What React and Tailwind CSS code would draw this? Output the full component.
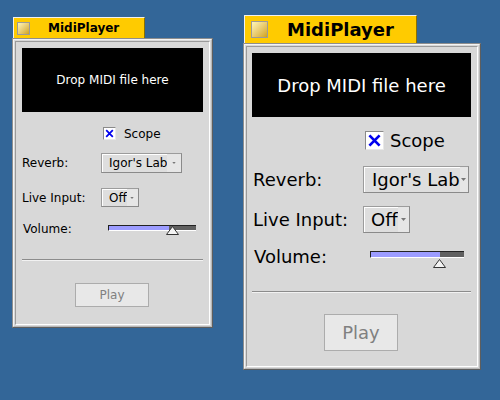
import React from "react";

const font = "font-['DejaVu_Sans','Liberation_Sans',sans-serif]";

function Frame({ className, children }) {
  return (
    <div className={"border border-[#8e8e8e] border-r-[#5e5e5e] border-b-[#5e5e5e] " + className}>
      <div className="h-full border border-[#f4f4f4] border-r-[#b8b8b8] border-b-[#b8b8b8] bg-[#d8d8d8] p-px">
        <div className="h-full border border-[#9a9a9a] border-r-white border-b-white bg-[#d8d8d8] flex flex-col">
          {children}
        </div>
      </div>
    </div>
  );
}

function CloseBox({ className }) {
  return (
    <div
      className={
        "border border-[#9a9a9a] bg-linear-to-br from-[#fff6b8] to-[#d2a400] " + className
      }
    />
  );
}

function Check({ className }) {
  return (
    <div className={"border border-[#8a8a8a] border-r-[#e8e8e8] border-b-[#e8e8e8] bg-white " + className}>
      <svg viewBox="0 0 10 10" className="w-full h-full">
        <path d="M2 2 L8 8 M8 2 L2 8" stroke="#0000ee" strokeWidth="1.6" fill="none" />
      </svg>
    </div>
  );
}

function Arrow({ className }) {
  return (
    <svg viewBox="0 0 5 3" className={className}>
      <path d="M0 0 L5 0 L2.5 3 Z" fill="#777" />
    </svg>
  );
}

function Menu({ label, className, textClass, arrowClass }) {
  return (
    <div
      className={
        "flex items-center border border-[#9c9c9c] border-r-[#8a8a8a] border-b-[#8a8a8a] bg-[#dedede] shadow-[inset_1px_1px_0_#ffffff] " +
        className
      }
    >
      <span className={"whitespace-nowrap " + textClass}>{label}</span>
      <div className="flex-1 h-full bg-[#e6e6e6] flex items-center justify-center">
        <Arrow className={arrowClass} />
      </div>
    </div>
  );
}

function Separator({ className }) {
  return (
    <div className={className}>
      <div className="h-px bg-[#8c8c8c]" />
      <div className="h-px bg-[#f2f2f2]" />
    </div>
  );
}

export default function App() {
  return (
    <div className={"relative w-[500px] h-[400px] overflow-hidden bg-[#336698] text-black " + font}>
      {/* small window */}
      <div className="absolute left-[12px] top-[17px] flex flex-col">
        <div className="ml-px w-[132px] h-[21px] bg-[#ffcb00] border-t border-l border-[#f0f0f0] border-r border-r-[#8a7000] flex items-center">
          <CloseBox className="ml-[3px] w-[13px] h-[13px]" />
          <span className="ml-[18px] text-[12px] font-bold leading-none">MidiPlayer</span>
        </div>
        <Frame className="w-[201px] h-[290px]">
          <div className="ml-[6px] mt-[6px] w-[181px] h-[64px] bg-black text-white text-[12px] flex items-center justify-center">
            Drop MIDI file here
          </div>
          <div className="mt-[15px] ml-[87px] flex items-center h-[13px]">
            <Check className="w-[13px] h-[13px]" />
            <span className="ml-[8px] text-[12px]">Scope</span>
          </div>
          <div className="mt-[13px] ml-[6px] flex items-center">
            <span className="w-[79px] text-[12px]">Reverb:</span>
            <Menu
              label="Igor's Lab"
              className="w-[81px] h-[20px]"
              textClass="pl-[7px] text-[12px]"
              arrowClass="w-[4px] h-[2px]"
            />
          </div>
          <div className="mt-[15px] ml-[6px] flex items-center">
            <span className="w-[79px] text-[12px]">Live Input:</span>
            <Menu
              label="Off"
              className="w-[38px] h-[19px]"
              textClass="pl-[7px] text-[12px]"
              arrowClass="w-[4px] h-[2px]"
            />
          </div>
          <div className="mt-[14px] ml-[7px] flex items-start">
            <span className="w-[85px] text-[12px] leading-[16px]">Volume:</span>
            <div className="relative mt-[4px] w-[88px] h-[6px] border-t border-l border-[#222] border-b border-b-white flex">
              <div className="w-[60px] bg-[#9c9cff]" />
              <div className="flex-1 bg-[#606060]" />
              <svg viewBox="0 0 13 9" className="absolute left-[57px] top-0 w-[13px] h-[9px]">
                <path d="M6.5 0.5 L12.5 8.5 L0.5 8.5 Z" fill="#f4f4f4" stroke="#333" strokeWidth="1" />
              </svg>
            </div>
          </div>
          <Separator className="mt-[22px] ml-[6px] w-[181px]" />
          <div className="mt-[22px] ml-[59px] w-[74px] h-[24px] border border-[#acacac] bg-[#e8e8e8] flex items-center justify-center text-[12px] text-[#808080]">
            Play
          </div>
        </Frame>
      </div>

      {/* large window */}
      <div className="absolute left-[243px] top-[15px] flex flex-col">
        <div className="ml-px w-[173px] h-[28px] bg-[#ffcb00] border-t border-l border-[#f0f0f0] border-r border-r-[#8a7000] flex items-center">
          <CloseBox className="ml-[6px] w-[17px] h-[17px]" />
          <span className="ml-[19px] text-[18px] font-bold leading-none">MidiPlayer</span>
        </div>
        <Frame className="w-[238px] h-[327px]">
          <div className="ml-[5px] mt-[6px] w-[219px] h-[64px] bg-black text-white text-[18px] flex items-center justify-center">
            Drop MIDI file here
          </div>
          <div className="mt-[14px] ml-[118px] flex items-center h-[19px]">
            <Check className="w-[19px] h-[19px]" />
            <span className="ml-[6px] text-[18px]">Scope</span>
          </div>
          <div className="mt-[16px] ml-[6px] flex items-center">
            <span className="w-[110px] text-[18px]">Reverb:</span>
            <Menu
              label="Igor's Lab"
              className="w-[106px] h-[27px]"
              textClass="pl-[8px] text-[18px]"
              arrowClass="w-[5px] h-[3px]"
            />
          </div>
          <div className="mt-[13px] ml-[6px] flex items-center">
            <span className="w-[110px] text-[18px]">Live Input:</span>
            <Menu
              label="Off"
              className="w-[47px] h-[27px]"
              textClass="pl-[7px] text-[18px]"
              arrowClass="w-[5px] h-[3px]"
            />
          </div>
          <div className="mt-[14px] ml-[7px] flex items-start">
            <span className="w-[116px] text-[18px] leading-[20px]">Volume:</span>
            <div className="relative mt-[4px] w-[94px] h-[7px] border-t border-l border-[#222] border-b border-b-white flex">
              <div className="w-[69px] bg-[#9c9cff]" />
              <div className="flex-1 bg-[#606060]" />
              <svg viewBox="0 0 13 9" className="absolute left-[62px] top-[7px] w-[13px] h-[9px]">
                <path d="M6.5 0.5 L12.5 8.5 L0.5 8.5 Z" fill="#f4f4f4" stroke="#333" strokeWidth="1" />
              </svg>
            </div>
          </div>
          <Separator className="mt-[24px] ml-[5px] w-[219px]" />
          <div className="mt-[21px] ml-[77px] w-[74px] h-[37px] border border-[#acacac] bg-[#e8e8e8] flex items-center justify-center text-[18px] text-[#808080]">
            Play
          </div>
        </Frame>
      </div>
    </div>
  );
}
